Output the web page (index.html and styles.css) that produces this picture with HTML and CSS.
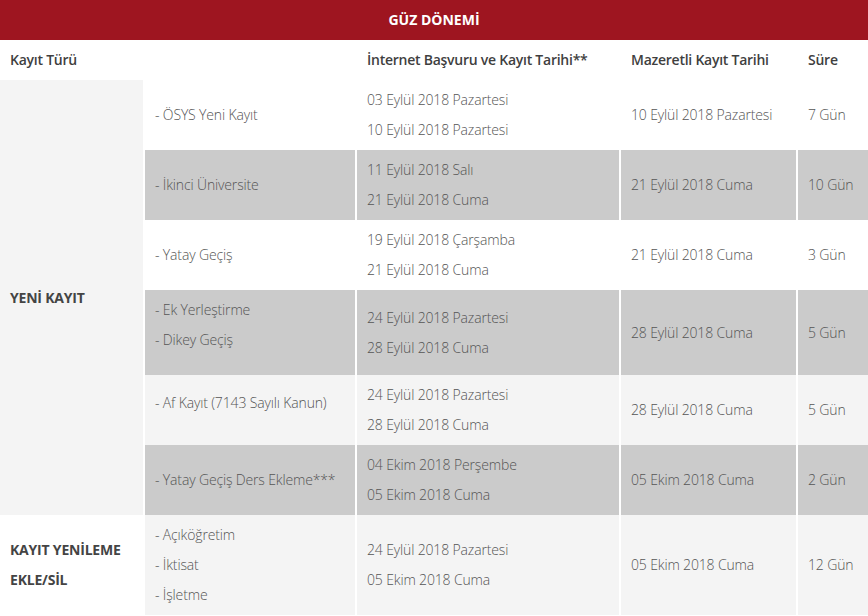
FILE: index.html
```html
<!DOCTYPE html>
<html lang="tr">
<head>
<meta charset="utf-8">
<title>Güz Dönemi</title>
<link rel="stylesheet" href="styles.css">
</head>
<body>
<div class="term">
  <div class="term-title">GÜZ DÖNEMİ</div>
  <table class="sched">
    <colgroup>
      <col class="c1"><col class="c2"><col class="c3"><col class="c4"><col class="c5">
    </colgroup>
    <thead>
      <tr>
        <th>Kayıt Türü</th>
        <th></th>
        <th>İnternet Başvuru ve Kayıt Tarihi**</th>
        <th>Mazeretli Kayıt Tarihi</th>
        <th>Süre</th>
      </tr>
    </thead>
    <tbody>
      <tr class="r-white">
        <td class="group group-light" rowspan="6">YENİ KAYIT</td>
        <td>- ÖSYS Yeni Kayıt</td>
        <td>03 Eylül 2018 Pazartesi<br>10 Eylül 2018 Pazartesi</td>
        <td>10 Eylül 2018 Pazartesi</td>
        <td>7 Gün</td>
      </tr>
      <tr class="r-gray">
        <td>- İkinci Üniversite</td>
        <td>11 Eylül 2018 Salı<br>21 Eylül 2018 Cuma</td>
        <td>21 Eylül 2018 Cuma</td>
        <td>10 Gün</td>
      </tr>
      <tr class="r-white">
        <td>- Yatay Geçiş</td>
        <td>19 Eylül 2018 Çarşamba<br>21 Eylül 2018 Cuma</td>
        <td>21 Eylül 2018 Cuma</td>
        <td>3 Gün</td>
      </tr>
      <tr class="r-gray">
        <td class="extra">- Ek Yerleştirme<br>- Dikey Geçiş</td>
        <td>24 Eylül 2018 Pazartesi<br>28 Eylül 2018 Cuma</td>
        <td>28 Eylül 2018 Cuma</td>
        <td>5 Gün</td>
      </tr>
      <tr class="r-light">
        <td class="extra">- Af Kayıt (7143 Sayılı Kanun)</td>
        <td>24 Eylül 2018 Pazartesi<br>28 Eylül 2018 Cuma</td>
        <td>28 Eylül 2018 Cuma</td>
        <td>5 Gün</td>
      </tr>
      <tr class="r-gray">
        <td>- Yatay Geçiş Ders Ekleme***</td>
        <td>04 Ekim 2018 Perşembe<br>05 Ekim 2018 Cuma</td>
        <td>05 Ekim 2018 Cuma</td>
        <td>2 Gün</td>
      </tr>
      <tr class="r-light">
        <td class="group group-white">KAYIT YENİLEME<br>EKLE/SİL</td>
        <td>- Açıköğretim<br>- İktisat<br>- İşletme</td>
        <td>24 Eylül 2018 Pazartesi<br>05 Ekim 2018 Cuma</td>
        <td>05 Ekim 2018 Cuma</td>
        <td>12 Gün</td>
      </tr>
    </tbody>
  </table>
</div>
</body>
</html>
```
FILE: styles.css
```css
* { box-sizing: border-box; }
html, body { margin: 0; padding: 0; background: #fff; }
body {
  font-family: "Open Sans", "Liberation Sans", sans-serif;
  font-size: 14px;
  color: #555;
}
.term { width: 868px; }
.term-title {
  height: 40px;
  line-height: 40px;
  background: #9e1520;
  color: #fff;
  text-align: center;
  font-weight: 700;
  font-size: 14px;
}
.sched {
  width: 868px;
  border-collapse: separate;
  border-spacing: 0;
  table-layout: fixed;
}
.c1 { width: 143px; }
.c2 { width: 212px; }
.c3 { width: 264px; }
.c4 { width: 177px; }
.c5 { width: 72px; }
.sched th {
  height: 40px;
  padding: 10px 0 10px 10px;
  line-height: 20px;
  text-align: left;
  font-weight: 600;
  letter-spacing: -0.25px;
  color: #3f3f3f;
  background: #fff;
}
.sched td {
  padding: 5px 0 5px 10px;
  line-height: 30px;
  font-weight: 300;
  letter-spacing: -0.15px;
  vertical-align: middle;
  height: 70px;
  border-left: 2px solid #fff;
}
.sched th + th { border-left: 2px solid #fff; }
.sched td.group {
  border-left: 0;
  font-weight: 700;
  letter-spacing: -0.2px;
  color: #444;
}
.sched td.extra { padding-bottom: 20px; }
.r-white td { background: #fff; }
.r-gray td { background: #cbcbcb; }
.r-light td { background: #f4f4f4; }
.sched td.group-light { background: #f4f4f4; }
.sched td.group-white { background: #fff; }
```
